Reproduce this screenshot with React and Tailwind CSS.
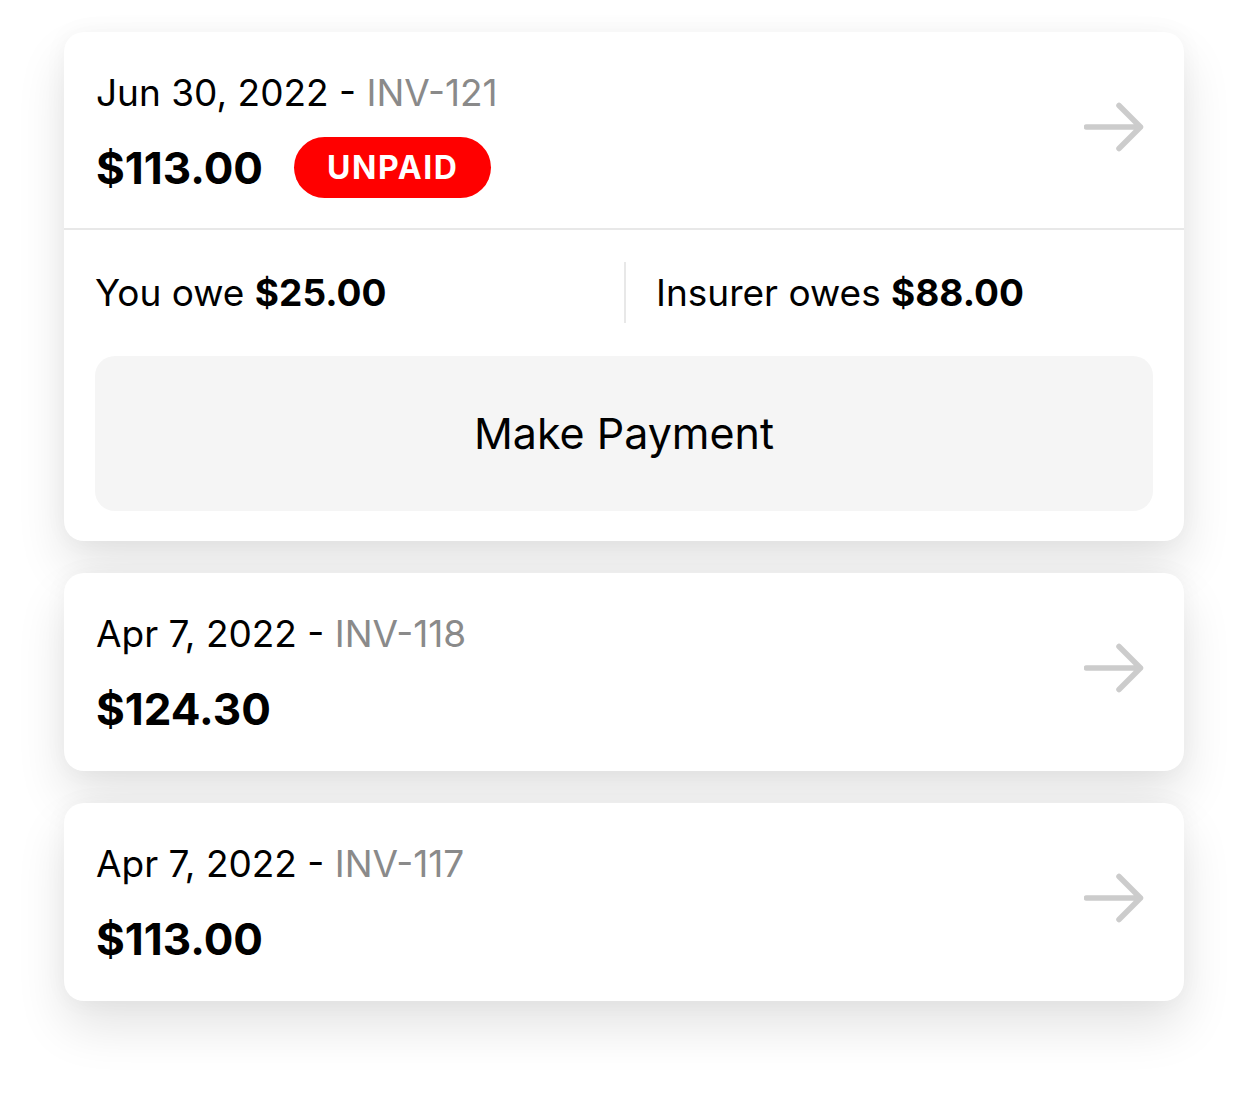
const invoices = [
  { date: "Jun 30, 2022", id: "INV-121", amount: "$113.00", unpaid: true, youOwe: "$25.00", insurerOwes: "$88.00" },
  { date: "Apr 7, 2022", id: "INV-118", amount: "$124.30" },
  { date: "Apr 7, 2022", id: "INV-117", amount: "$113.00" },
];

const Arrow = () => (
  <svg width="60" height="52" viewBox="0 0 60 52" fill="none" className="shrink-0 mb-[15px]">
    <path
      d="M2.5 26H56.5M35 4.5L56.5 26L35 47.5"
      stroke="#cccccc"
      strokeWidth="5.5"
      strokeLinecap="round"
      strokeLinejoin="round"
    />
  </svg>
);

const InvoiceCard = ({ invoice }) => {
  return (
    <div className="bg-white rounded-[20px] shadow-[0_0_24px_rgba(0,0,0,0.04),0_26px_50px_rgba(0,0,0,0.11)]">
      <div
        className={`flex items-center justify-between pl-8 pr-[40px] pt-[39px] ${
          invoice.unpaid ? "pb-[30px] border-b-2 border-[#e8e8e8]" : "pb-[32px]"
        }`}
      >
        <div>
          <div className="text-[37px] leading-[44px] text-black">
            {invoice.date} - <span className="text-[#8a8a8a]">{invoice.id}</span>
          </div>
          <div className="mt-[22px] h-[61px] flex items-center gap-[31px]">
            <span className="text-[44px] font-bold text-black">{invoice.amount}</span>
            {invoice.unpaid && (
              <span className="h-[61px] px-[33px] flex items-center rounded-full bg-[#ff0000] text-white text-[32px] font-bold tracking-[0.05em]">
                UNPAID
              </span>
            )}
          </div>
        </div>
        <Arrow />
      </div>

      {invoice.unpaid && (
        <div className="px-[31px] pt-[32px] pb-[30px]">
          <div className="grid grid-cols-2 h-[61px]">
            <div className="flex items-center text-[37px] text-black">
              You owe&nbsp;<span className="font-bold">{invoice.youOwe}</span>
            </div>
            <div className="flex items-center border-l-2 border-[#e8e8e8] pl-[30px] text-[37px] text-black">
              Insurer owes&nbsp;<span className="font-bold">{invoice.insurerOwes}</span>
            </div>
          </div>
          <button className="mt-[33px] w-full h-[155px] rounded-[20px] bg-[#f5f5f5] text-[43px] text-black">
            Make Payment
          </button>
        </div>
      )}
    </div>
  );
};

export default function App() {
  return (
    <div className="min-h-[1096px] bg-white pt-[32px] font-['Inter','Noto_Sans',sans-serif]">
      <div className="ml-[64px] w-[1120px] flex flex-col gap-[32px]">
        {invoices.map((inv, i) => (
          <InvoiceCard key={i} invoice={inv} />
        ))}
      </div>
    </div>
  );
}
